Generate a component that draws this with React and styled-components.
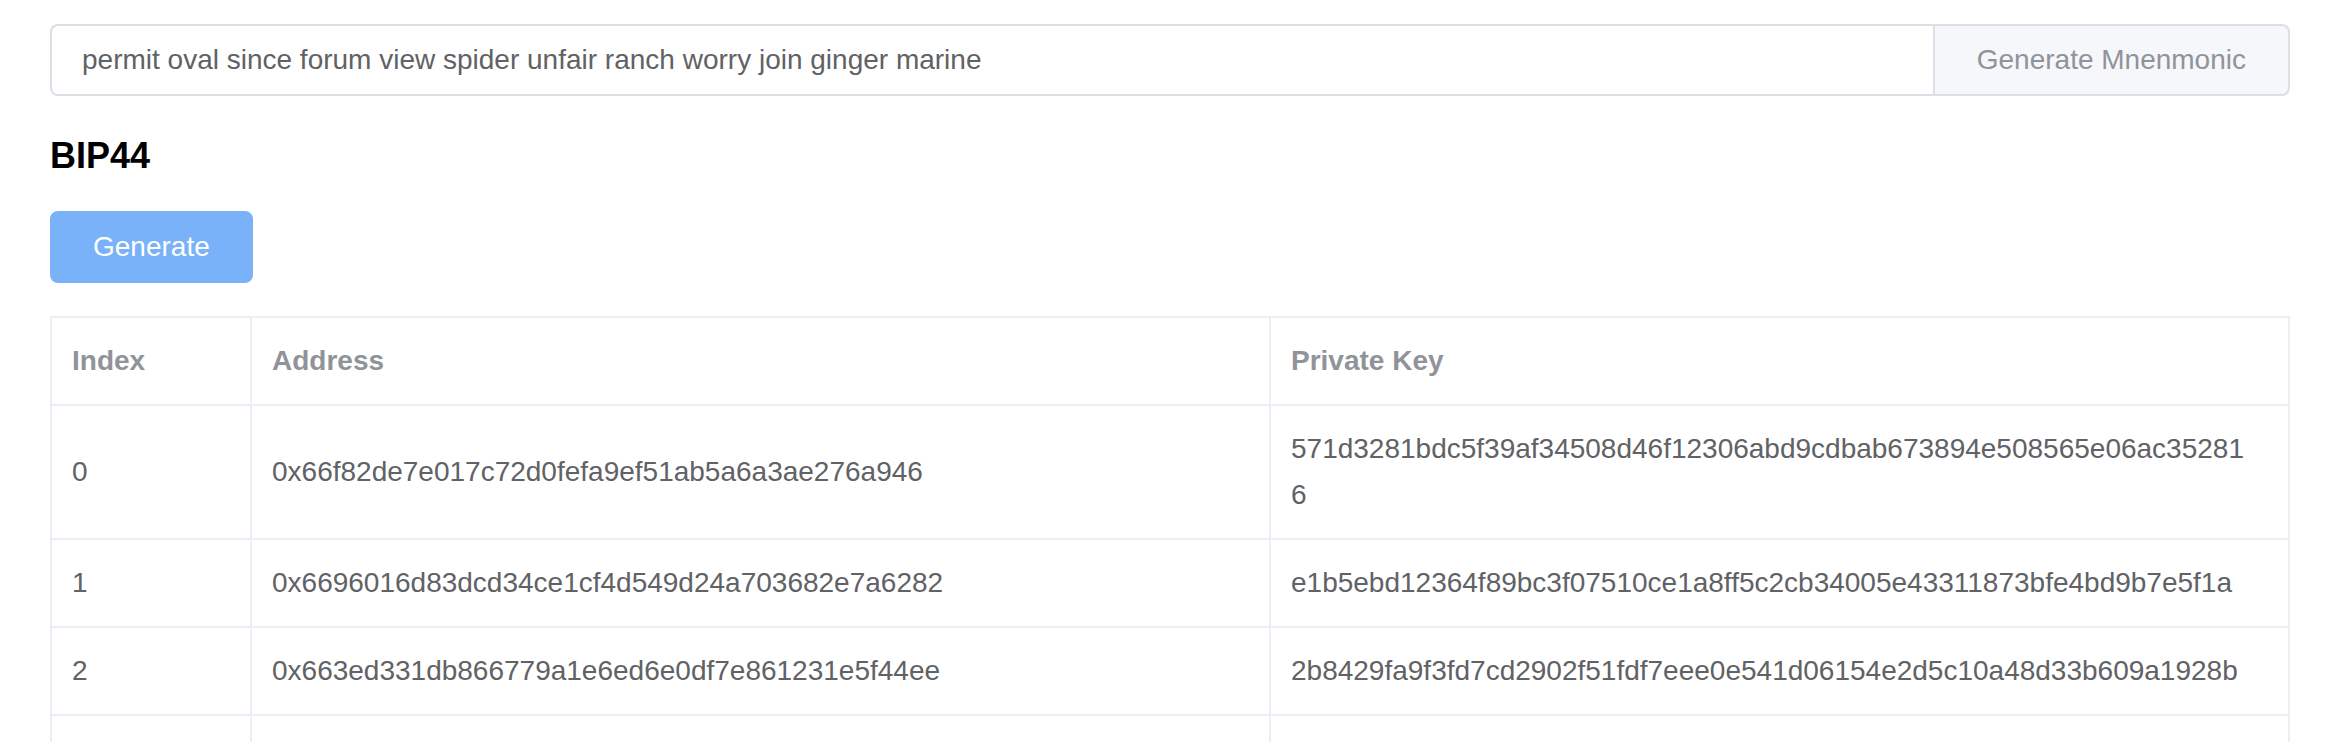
import React, { useState } from 'react'
import styled, { createGlobalStyle } from 'styled-components'

const GlobalStyle = createGlobalStyle`
    body {
        margin: 0;
        background: #fff;
        font-family: "Liberation Sans", Arial, Helvetica, sans-serif;
        -webkit-font-smoothing: antialiased;
    }
`

const Page = styled.main`
    padding: 24px 46px 0 50px;
`

const InputGroup = styled.div`
    display: flex;
    height: 72px;
    width: 100%;
`

const MnemonicInput = styled.input`
    flex: 1;
    min-width: 0;
    box-sizing: border-box;
    height: 100%;
    border: 2px solid #dcdfe6;
    border-right: none;
    border-radius: 8px 0 0 8px;
    padding: 0 30px;
    font-family: inherit;
    font-size: 28px;
    color: #606266;
    outline: none;
`

const Append = styled.button`
    box-sizing: border-box;
    height: 100%;
    padding: 0 42px;
    background: #f5f7fa;
    border: 2px solid #dcdfe6;
    border-radius: 0 8px 8px 0;
    font-family: inherit;
    font-size: 28px;
    color: #909399;
    white-space: nowrap;
    cursor: pointer;
`

const Title = styled.h3`
    margin: 39px 0 34px;
    font-size: 36px;
    line-height: 42px;
    font-weight: 700;
    color: #000;
`

const PrimaryButton = styled.button`
    display: block;
    box-sizing: border-box;
    height: 72px;
    padding: 0 41px;
    background: #79b2f8;
    border: 2px solid #79b2f8;
    border-radius: 8px;
    font-family: inherit;
    font-size: 28px;
    color: #fff;
    cursor: pointer;
`

const Table = styled.table`
    margin-top: 33px;
    width: 100%;
    table-layout: fixed;
    border-collapse: collapse;
    border: 2px solid #ebeef5;
    font-size: 28px;
`

const Cell = styled.td`
    border: 2px solid #ebeef5;
    padding: 20px ${p => (p.$wide ? '40px' : '20px')} 20px 20px;
    line-height: 46px;
    text-align: left;
    vertical-align: middle;
    word-break: break-all;
    color: ${p => (p.$head ? '#909399' : '#606266')};
    font-weight: ${p => (p.$head ? 700 : 400)};
`

const accounts = [
    {
        address: '0x66f82de7e017c72d0fefa9ef51ab5a6a3ae276a946',
        key: '571d3281bdc5f39af34508d46f12306abd9cdbab673894e508565e06ac352816'
    },
    {
        address: '0x6696016d83dcd34ce1cf4d549d24a703682e7a6282',
        key: 'e1b5ebd12364f89bc3f07510ce1a8ff5c2cb34005e43311873bfe4bd9b7e5f1a'
    },
    {
        address: '0x663ed331db866779a1e6ed6e0df7e861231e5f44ee',
        key: '2b8429fa9f3fd7cd2902f51fdf7eee0e541d06154e2d5c10a48d33b609a1928b'
    }
]

const App = () => {
    const [mnemonic, setMnemonic] = useState('permit oval since forum view spider unfair ranch worry join ginger marine')

    return (
        <Page>
            <GlobalStyle />
            <InputGroup>
                <MnemonicInput value={mnemonic} onChange={e => setMnemonic(e.target.value)} />
                <Append type="button">Generate Mnenmonic</Append>
            </InputGroup>
            <Title>BIP44</Title>
            <PrimaryButton type="button">Generate</PrimaryButton>
            <Table>
                <colgroup>
                    <col style={{ width: 200 }} />
                    <col />
                    <col />
                </colgroup>
                <thead>
                    <tr>
                        <Cell as="th" $head>Index</Cell>
                        <Cell as="th" $head>Address</Cell>
                        <Cell as="th" $head $wide>Private Key</Cell>
                    </tr>
                </thead>
                <tbody>
                    {accounts.map((a, i) => (
                        <tr key={a.address}>
                            <Cell>{i}</Cell>
                            <Cell>{a.address}</Cell>
                            <Cell $wide>{a.key}</Cell>
                        </tr>
                    ))}
                    {/* next row continues below the fold */}
                    <tr>
                        <Cell>&nbsp;</Cell>
                        <Cell>&nbsp;</Cell>
                        <Cell $wide>&nbsp;</Cell>
                    </tr>
                </tbody>
            </Table>
        </Page>
    )
}

export default App
